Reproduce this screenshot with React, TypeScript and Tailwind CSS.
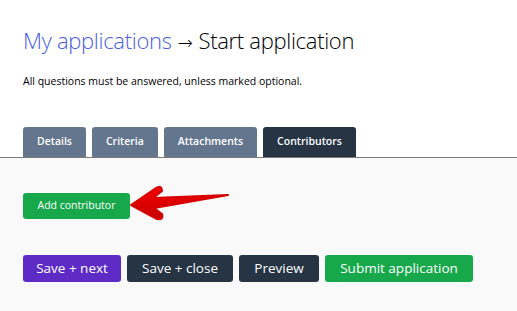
import React from "react";

const tabs = ["Details", "Criteria", "Attachments", "Contributors"];

const actions = [
  { label: "Save + next", cls: "w-[98px] bg-[#5e2bc6]" },
  { label: "Save + close", cls: "w-[106px] bg-[#263444]" },
  { label: "Preview", cls: "w-[80px] bg-[#263444]" },
  { label: "Submit application", cls: "w-[148px] bg-[#17a84b]" },
];

function Arrow() {
  return (
    <svg width="102" height="38" viewBox="0 0 102 38" className="absolute left-[128px] top-[184px]">
      <defs>
        <linearGradient id="ar" x1="0" y1="0" x2="0" y2="1">
          <stop offset="0" stopColor="#f50000" />
          <stop offset="1" stopColor="#c40000" />
        </linearGradient>
      </defs>
      <path
        d="M3 21 L28 4 Q34 1 34 7 L25 14 L100 11 L26 24 L34 30 Q36 36 29 35 Z"
        fill="url(#ar)"
        stroke="#d60000"
        strokeWidth="2"
        strokeLinejoin="round"
      />
    </svg>
  );
}

export default function App() {
  return (
    <div className="relative min-h-[311px] w-[517px] bg-white font-['Open_Sans',sans-serif] text-black">
      <div className="px-[23px] pt-[24px]">
        <h1 className="text-[22px] font-light leading-[32px] tracking-[-0.3px]">
          <a className="text-[#4a5ee3]">My applications</a>
          <span className="mx-[6px] font-['DejaVu_Sans',sans-serif] text-[18px]">→</span>
          <span>Start application</span>
        </h1>
        <p className="mt-[15px] text-[10.5px] leading-[14px]">
          All questions must be answered, unless marked optional.
        </p>
        <div className="mt-[39px] flex gap-[6px]">
          {tabs.map((t) => (
            <div
              key={t}
              className={
                "flex h-[30px] items-center rounded-t-[3px] px-[14px] text-[10.5px] font-semibold text-white " +
                (t === "Contributors" ? "bg-[#263444]" : "bg-[#64768e]")
              }
            >
              {t}
            </div>
          ))}
        </div>
      </div>
      <div className="h-[1px] bg-[#7a7a7a]" />
      <div className="min-h-[154px] bg-[#f9f9f9] px-[23px] pt-[33px]">
        <button className="h-[26px] w-[107px] rounded-[3px] bg-[#17a84b] text-[10.5px] font-medium text-white">
          Add contributor
        </button>
        <div className="mt-[36px] flex gap-[6px]">
          {actions.map((a) => (
            <button
              key={a.label}
              className={"h-[27px] rounded-[3px] text-[13.5px] font-medium text-white " + a.cls}
            >
              {a.label}
            </button>
          ))}
        </div>
      </div>
      <Arrow />
    </div>
  );
}
